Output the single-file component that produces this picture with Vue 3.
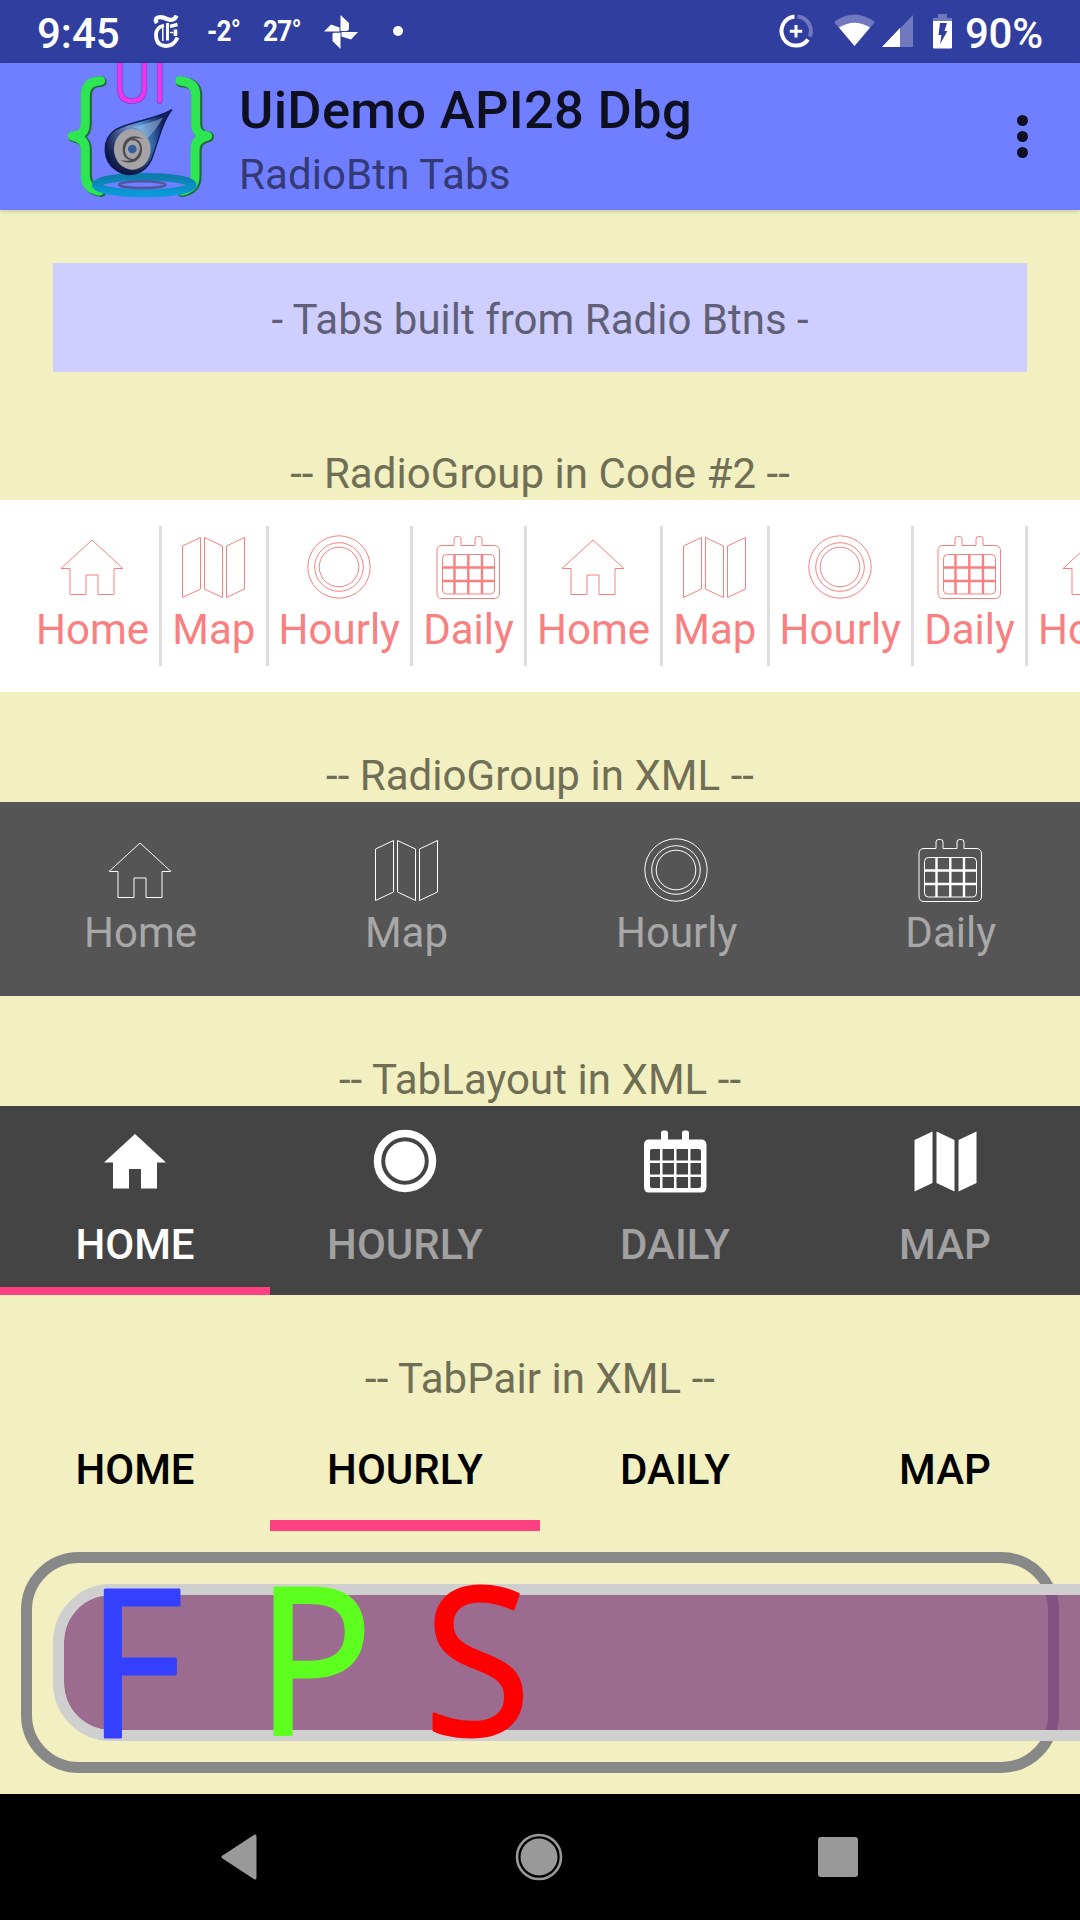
<script setup>
import { h } from 'vue'

const tabs = [
  { id: 'home', label: 'Home' },
  { id: 'map', label: 'Map' },
  { id: 'hourly', label: 'Hourly' },
  { id: 'daily', label: 'Daily' },
]
const scrollTabs = [...tabs, ...tabs, tabs[0]]
const layoutTabs = [tabs[0], tabs[2], tabs[3], tabs[1]]

const p = (d, extra = {}) => h('path', { d, ...extra })
const c = (r, extra = {}) => h('circle', { cx: 32, cy: 32, r, ...extra })

const HOUSE = 'M32 5L63 33.5H54V59.5H38V40H26V59.5H10V33.5H1Z'
const MAP = 'M1.5 11L19.5 2.5V54L1.5 62.5ZM23.5 2.5L41.5 11V62.5L23.5 54ZM45.5 11L63.5 2.5V54L45.5 62.5Z'
const CAL =
  'M6 10.5H18V4Q18 1.5 20.500 1.500H22.500Q25 1.500 25 4V10.500H39V4Q39 1.500 41.500 1.500H43.500Q46 1.500 46 4V10.500H58Q63.500 10.500 63.500 16V58Q63.500 63.500 58 63.500H6Q1 63.500 1 58V16Q1 10.500 6 10.500Z'

function TabIcon({ name, solid }) {
  let kids
  if (name === 'home') kids = [p(HOUSE)]
  else if (name === 'map') kids = [p(MAP)]
  else if (name === 'hourly') {
    kids = solid
      ? [c(27.5, { fill: 'none', stroke: 'currentColor', 'stroke-width': 7.5 }), c(19.8)]
      : [c(31.2), c(24.3), c(19.8)]
  } else {
    kids = solid
      ? [
          p(CAL),
          p('M9 20H17V31.500H7V22Q7 20 9 20ZM19.500 20H31V31.500H19.500ZM33.500 20H45V31.500H33.500ZM47.500 20H55.500Q58 20 58 22V31.500H47.500ZM7 34H17V45.500H7ZM19.500 34H31V45.500H19.500ZM33.500 34H45V45.500H33.500ZM47.500 34H58V45.500H47.500ZM7 48H17V59H9Q7 59 7 57ZM19.500 48H31V59H19.500ZM33.500 48H45V59H33.500ZM47.500 48H58V57Q58 59 55.500 59H47.500Z', { fill: '#444' }),
        ]
      : [
          p(CAL),
          h('rect', { x: 6.5, y: 19.5, width: 52, height: 39.5, rx: 4 }),
          p('M18.500 19.500V59M32.300 19.500V59M46 19.500V59M6.500 32.500H58.500M6.500 46H58.500', { 'stroke-width': 2.4 }),
        ]
  }
  return h(
    'svg',
    { class: ['tab-icon', solid ? 'solid' : 'outline'], viewBox: '0 0 65 65', width: 65, height: 65 },
    kids,
  )
}
TabIcon.props = ['name', 'solid']
</script>

<template>
  <div class="screen">
    <header class="status">
      <div class="status-left">
        <span class="clock">9:45</span>
        <svg class="news" width="28" height="35" viewBox="0 0 28 35" fill="none" stroke="#fff">
          <path d="M4 9Q1 5 5 3.500Q9 2.500 14 5Q21 8 23.500 1.500" stroke-width="4.200" />
          <path d="M11 11.500Q3 13 3 21Q3 31.500 13 32Q21 32 24.500 23.500" stroke-width="3.800" />
          <path d="M14.500 9V26.500" stroke-width="3" />
          <path d="M9.800 14V27" stroke-width="1.500" />
          <path d="M17 12.500L24.500 10.500" stroke-width="3.600" />
          <path d="M17 18.500H20.500" stroke-width="1.400" />
          <path d="M22.500 15.500V22" stroke-width="3.600" />
        </svg>
        <span class="temp low">-2°</span>
        <span class="temp high">27°</span>
        <svg class="pinwheel" width="34" height="34" viewBox="0 0 34 34" fill="#fff">
          <path d="M16.500 0L25 8V14.500L23 16H16.500ZM34 17L27 24.500L17.500 21.500V17ZM16.500 34L8.500 26V18.500L10 17.800H16.500ZM0 16.500L7 9.500L15.500 12.500V16.500Z" />
        </svg>
        <i class="more-dot"></i>
      </div>
      <div class="status-right">
        <svg width="34" height="34" viewBox="0 0 34 34" fill="none">
          <path d="M15.500 2.500A14.600 14.600 0 1 0 29 25.500" stroke="#fff" stroke-width="4" />
          <path d="M18.500 2.500A14.600 14.600 0 0 1 30.800 22.500" stroke="#7079bd" stroke-width="4" />
          <path d="M17 11V23.500M10.800 17.200H23.200" stroke="#fff" stroke-width="3" />
        </svg>
        <svg class="wifi" width="41" height="33" viewBox="0 0 41 33">
          <path d="M0 8Q20.500 -7 41 8L20.500 32Z" fill="#7079bd" />
          <path d="M5 13.500Q20.500 4 36 13.500L20.500 32Z" fill="#fff" />
        </svg>
        <svg class="signal" width="31" height="32" viewBox="0 0 31 32">
          <path d="M31 0V32H0Z" fill="#7079bd" />
          <path d="M18 13V32H0Z" fill="#fff" />
        </svg>
        <svg class="battery" width="19" height="35" viewBox="0 0 19 35">
          <path d="M5 0H14V4H19V7H0V4H5Z" fill="#7079bd" />
          <path d="M0 7H19V33.500Q19 34.500 18 34.500H1Q0 34.500 0 33.500Z" fill="#fff" />
          <path d="M7 9H14L11.500 17H14.500L7 30L8.500 21H5.500Z" fill="#303e9f" />
        </svg>
        <span class="clock percent">90%</span>
      </div>
    </header>

    <div class="appbar">
      <svg class="logo" width="160" height="147" viewBox="0 9 480 441" fill="none">
        <defs>
          <linearGradient id="drop" x1="0" y1="0.600" x2="0.900" y2="0.400">
            <stop offset="0" stop-color="#0b1648" />
            <stop offset="0.450" stop-color="#6f8fc4" />
            <stop offset="0.650" stop-color="#4a8fd0" />
            <stop offset="1" stop-color="#10205c" />
          </linearGradient>
          <linearGradient id="shade" x1="0" y1="0" x2="0" y2="1">
            <stop offset="0.550" stop-color="#0b1440" stop-opacity="0" />
            <stop offset="1" stop-color="#0b1440" />
          </linearGradient>
          <linearGradient id="pool" x1="0" y1="0" x2="0" y2="1">
            <stop offset="0" stop-color="#0d7cae" />
            <stop offset="1" stop-color="#0a9ad8" />
          </linearGradient>
        </defs>
        <g stroke-linecap="round" stroke-linejoin="round">
          <g stroke="#1f6b3c" stroke-width="32">
            <path d="M124 65Q80 66 80 106V190Q80 217 60 227L40 230Q80 238 80 270V350Q82 388 124 395" />
            <path d="M363 66Q411 68 411 106V190Q411 217 430 227L446 230Q409 238 409 270V350Q408 388 366 395" />
          </g>
          <g stroke="#2ee552" stroke-width="27">
            <path d="M122 62Q76 64 76 104V190Q76 217 56 225L37 228Q76 236 76 268V350Q78 386 118 393" />
            <path d="M359 62Q407 66 407 104V190Q407 217 426 225L443 228Q405 236 405 268V350Q404 386 366 393" />
          </g>
          <path d="M179 8V85Q180 123 215 123Q253 123 253 85V8M299 8V123" stroke="#6b49bd" stroke-width="17" />
          <path d="M179 8V85Q180 123 215 123Q253 123 253 85V8M299 8V123" stroke="#f135ef" stroke-width="13" />
        </g>
        <ellipse cx="253" cy="375" rx="145" ry="25" stroke="url(#pool)" stroke-width="24" />
        <ellipse cx="247" cy="374" rx="70" ry="10" stroke="#52559d" stroke-width="7" />
        <path d="M336 149C284 180 214 183 167 209C120 240 130 306 168 330C207 358 256 340 274 300C294 248 305 188 336 149Z" fill="url(#drop)" stroke="#101d55" stroke-width="4" />
        <path d="M336 149C284 180 214 183 167 209C120 240 130 306 168 330C207 358 256 340 274 300C294 248 305 188 336 149Z" fill="url(#shade)" />
        <path d="M310 172Q275 190 215 200Q245 207 262 235Q285 215 310 172Z" fill="#b4cbee" opacity="0.450" />
        <ellipse cx="217" cy="268" rx="55" ry="61" fill="#a5a3a5" />
        <path d="M188 268C188 232 222 218 250 238C226 230 200 238 195 268C194 292 212 300 226 296C208 306 188 296 188 268ZM246 268C246 304 212 318 182 300C208 307 234 300 240 268C241 246 224 238 208 242C226 230 246 242 246 268Z" fill="#4c4b51" />
        <circle cx="217" cy="267" r="13" fill="#315f99" />
      </svg>
      <div class="titles">
        <h1>UiDemo API28 Dbg</h1>
        <h2>RadioBtn Tabs</h2>
      </div>
      <div class="overflow"><i></i><i></i><i></i></div>
    </div>

    <main>
      <div class="banner">- Tabs built from Radio Btns -</div>

      <p class="caption first">-- RadioGroup in Code #2 --</p>
      <div class="band scroll">
        <div v-for="(t, i) in scrollTabs" :key="i" class="scroll-tab">
          <TabIcon :name="t.id" />
          <span>{{ t.label }}</span>
        </div>
      </div>

      <p class="caption">-- RadioGroup in XML --</p>
      <div class="band radio">
        <div v-for="t in tabs" :key="t.id" class="radio-tab">
          <TabIcon :name="t.id" />
          <span>{{ t.label }}</span>
        </div>
      </div>

      <p class="caption">-- TabLayout in XML --</p>
      <div class="layout">
        <div v-for="(t, i) in layoutTabs" :key="t.id" class="layout-tab" :class="{ active: i === 0 }">
          <TabIcon :name="t.id" :solid="true" />
          <span>{{ t.label }}</span>
        </div>
      </div>

      <p class="caption">-- TabPair in XML --</p>
      <div class="pair">
        <div v-for="(t, i) in layoutTabs" :key="t.id" class="pair-tab" :class="{ active: i === 1 }">
          {{ t.label }}
        </div>
      </div>

      <div class="frame">
        <div class="pill">
          <svg class="letters" width="500" height="157" viewBox="0 0 500 157">
            <text x="34" y="152.500" fill="#3540ff" stroke="#3540ff" textLength="96" lengthAdjust="spacingAndGlyphs">F</text>
            <text x="203" y="151" fill="#5dff1f" stroke="#5dff1f" textLength="117" lengthAdjust="spacingAndGlyphs">P</text>
            <text x="371" y="151" fill="#f00" stroke="#f00" textLength="107" lengthAdjust="spacingAndGlyphs">S</text>
          </svg>
        </div>
      </div>
    </main>

    <nav>
      <svg width="38" height="46" viewBox="0 0 38 46"><path d="M35 2V44L3 23Z" fill="#999" stroke="#999" stroke-width="3" stroke-linejoin="round" /></svg>
      <svg width="48" height="48" viewBox="0 0 48 48"><circle cx="24" cy="24" r="22" fill="none" stroke="#999" stroke-width="2.600" /><circle cx="24" cy="24" r="18.500" fill="#999" /></svg>
      <i class="recent"></i>
    </nav>
  </div>
</template>

<style>
body { background: #f2f0c0; }
</style>

<style scoped>
.screen {
  width: 1080px;
  height: 1920px;
  overflow: hidden;
  display: flex;
  flex-direction: column;
  background: #f2f0c0;
  font: 400 42px/49px Roboto, sans-serif;
}
.status {
  height: 63px;
  background: #303e9f;
  color: #fff;
  display: flex;
  justify-content: space-between;
}
.status-left, .status-right { display: flex; align-items: flex-start; }
.status-left { padding-left: 37px; }
.status-right { padding: 14px 37px 0 0; }
.clock { font-weight: 500; margin-top: 9px; width: 84px; }
.percent { margin-top: -5px; width: 78px; margin-left: 13px; letter-spacing: -0.3px; }
.news { margin: 14px 0 0 32px; }
.temp {
  font-size: 29px;
  font-weight: 700;
  line-height: 34px;
  margin-top: 14px;
  letter-spacing: -0.8px;
  transform: scaleX(0.9);
  transform-origin: left;
}
.low { margin-left: 26px; width: 34px; }
.high { margin-left: 22px; width: 36px; }
.pinwheel { margin: 15px 0 0 25px; }
.more-dot { width: 10px; height: 10px; border-radius: 50%; background: #fff; margin: 26px 0 0 35px; }
.wifi { margin-left: 21px; }
.signal { margin: 1px 0 0 7px; }
.battery { margin-left: 20px; }

.appbar {
  height: 147px;
  background: #707fff;
  display: flex;
  box-shadow: 0 1px 4px rgba(0, 0, 0, 0.22);
}
.logo { margin-left: 60px; flex: none; }
.titles { margin-left: 19px; flex: 1; }
h1 { margin: 16px 0 0; font-size: 52.5px; line-height: 62px; font-weight: 500; letter-spacing: 0.3px; color: #0e1020; }
h2 { margin: 9px 0 0; font-size: 42px; line-height: 49px; font-weight: 400; letter-spacing: 0.1px; color: #343a75; }
.overflow { display: flex; flex-direction: column; gap: 5px; margin: 52px 52px 0 0; }
.overflow i { width: 11px; height: 11px; border-radius: 50%; background: #0e1020; }

main { flex: 1; display: flex; flex-direction: column; text-align: center; }
.banner { margin: 53px 53px 0; height: 77px; padding-top: 32px; background: #cfcfff; color: #5f5f78; }
.caption { margin: 59px 0 0; height: 51px; color: #706e55; letter-spacing: 0.05px; }
.caption.first { margin-top: 77px; }

:deep(.tab-icon) { display: block; flex: none; }
:deep(.outline) { fill: none; stroke: currentColor; stroke-width: 1; }
:deep(.solid) { fill: currentColor; color: #fff; }

.scroll { height: 166px; padding: 26px 0 0 26px; background: #fff; display: flex; overflow: hidden; }
.scroll-tab {
  flex: none;
  height: 131px;
  padding: 9px 10.1px 0;
  border-right: 3px solid #dedede;
  display: flex;
  flex-direction: column;
  align-items: center;
  color: #f98080;
}
.scroll-tab span, .radio-tab span { margin-top: 5px; }
.radio { height: 194px; background: #555; display: flex; }
.radio-tab {
  flex: 1 1 auto;
  padding-top: 36px;
  display: flex;
  flex-direction: column;
  align-items: center;
  color: #a8a8a8;
}
.radio-tab :deep(.tab-icon) { color: #fff; }

.layout { height: 189px; background: #444; display: flex; }
.layout-tab {
  flex: 1;
  padding-top: 23px;
  box-sizing: border-box;
  display: flex;
  flex-direction: column;
  align-items: center;
  gap: 26px;
  color: #a1a1a1;
  font-weight: 500;
  text-transform: uppercase;
}
.layout-tab.active { color: #fff; border-bottom: 8px solid #ff4081; }

.pair { height: 126px; display: flex; }
.pair-tab {
  flex: 1;
  box-sizing: border-box;
  padding-top: 40px;
  font-weight: 500;
  color: #000;
  text-transform: uppercase;
}
.pair-tab.active { border-bottom: 11px solid #ff4081; }

.frame {
  box-sizing: border-box;
  margin: 21px 21px 0;
  height: 221px;
  padding: 21px;
  border: 11px solid #888;
  border-radius: 58px;
}
.pill {
  box-sizing: border-box;
  width: 1200px;
  height: 157px;
  border: 11px solid #cfcfcf;
  border-radius: 58px;
  background: rgba(128, 64, 128, 0.753);
  background-clip: padding-box;
}
.letters { display: block; margin: -11px 0 0 -11px; overflow: visible; }
.letters text { font: 400 206px "Open Sans", sans-serif; stroke-width: 3; stroke-linejoin: round; }

nav { height: 126px; background: #000; display: flex; align-items: center; }
nav svg:first-child { margin-left: 220px; }
nav svg:nth-child(2) { margin-left: 257px; }
.recent { width: 40px; height: 40px; margin-left: 255px; border-radius: 3px; background: #999; }
</style>
